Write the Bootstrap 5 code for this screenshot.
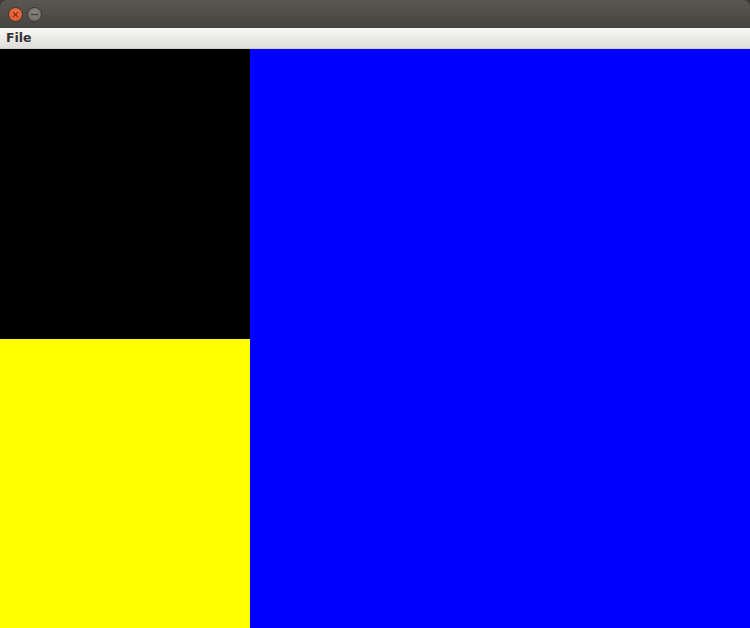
<!DOCTYPE html>
<html lang="en">
<head>
<meta charset="utf-8">
<title>File</title>
<link href="https://cdn.jsdelivr.net/npm/bootstrap@5.3.0/dist/css/bootstrap.min.css" rel="stylesheet">
<style>
html, body { height: 100%; margin: 0; overflow: hidden; background: #3c3b37; }
.win-shell { height: 628px; }
.win-title { height: 28px; flex: none; background: linear-gradient(#5a5750, #45443e); border-radius: 7px 7px 0 0; padding-left: 8px; gap: 4px; }
.win-btn { width: 15px; height: 15px; border-radius: 50%; flex: none; }
.win-btn svg { display: block; }
.win-close { background: radial-gradient(circle at 50% 40%, #f4744a, #d9502a); border: 1px solid #3a3833; }
.win-min { background: radial-gradient(circle at 50% 40%, #8a8984, #66655f); border: 1px solid #3a3833; }
.win-menu { height: 21px; flex: none; background: linear-gradient(#f8f8f7, #dedddb); border-bottom: 1px solid #cfcecc; }
.win-menu-item { font: bold 12.5px/1 "DejaVu Sans", sans-serif; color: #333; padding: 4px 0 0 6px; }
.win-body { min-height: 0; }
.side-col { width: 250px; flex: none; }
.pane-black { height: 290px; flex: none; background: #000; }
.pane-yellow { background: #ff0; }
.pane-blue { background: #00f; }
</style>
</head>
<body>
<div class="win-shell d-flex flex-column">
  <div class="win-title d-flex align-items-center">
    <span class="win-btn win-close"><svg width="13" height="13" viewBox="0 0 13 13"><path d="M4 4l5 5M9 4l-5 5" stroke="#8c2f14" stroke-width="1.4" fill="none"/></svg></span>
    <span class="win-btn win-min"><svg width="13" height="13" viewBox="0 0 13 13"><path d="M3 6.5h7" stroke="#3f3e3a" stroke-width="1.4" fill="none"/></svg></span>
  </div>
  <div class="win-menu"><div class="win-menu-item">File</div></div>
  <div class="win-body d-flex flex-grow-1">
    <div class="side-col d-flex flex-column">
      <div class="pane-black"></div>
      <div class="pane-yellow flex-grow-1"></div>
    </div>
    <div class="pane-blue flex-grow-1"></div>
  </div>
</div>
<script src="https://cdn.jsdelivr.net/npm/bootstrap@5.3.0/dist/js/bootstrap.bundle.min.js"></script>
</body>
</html>
